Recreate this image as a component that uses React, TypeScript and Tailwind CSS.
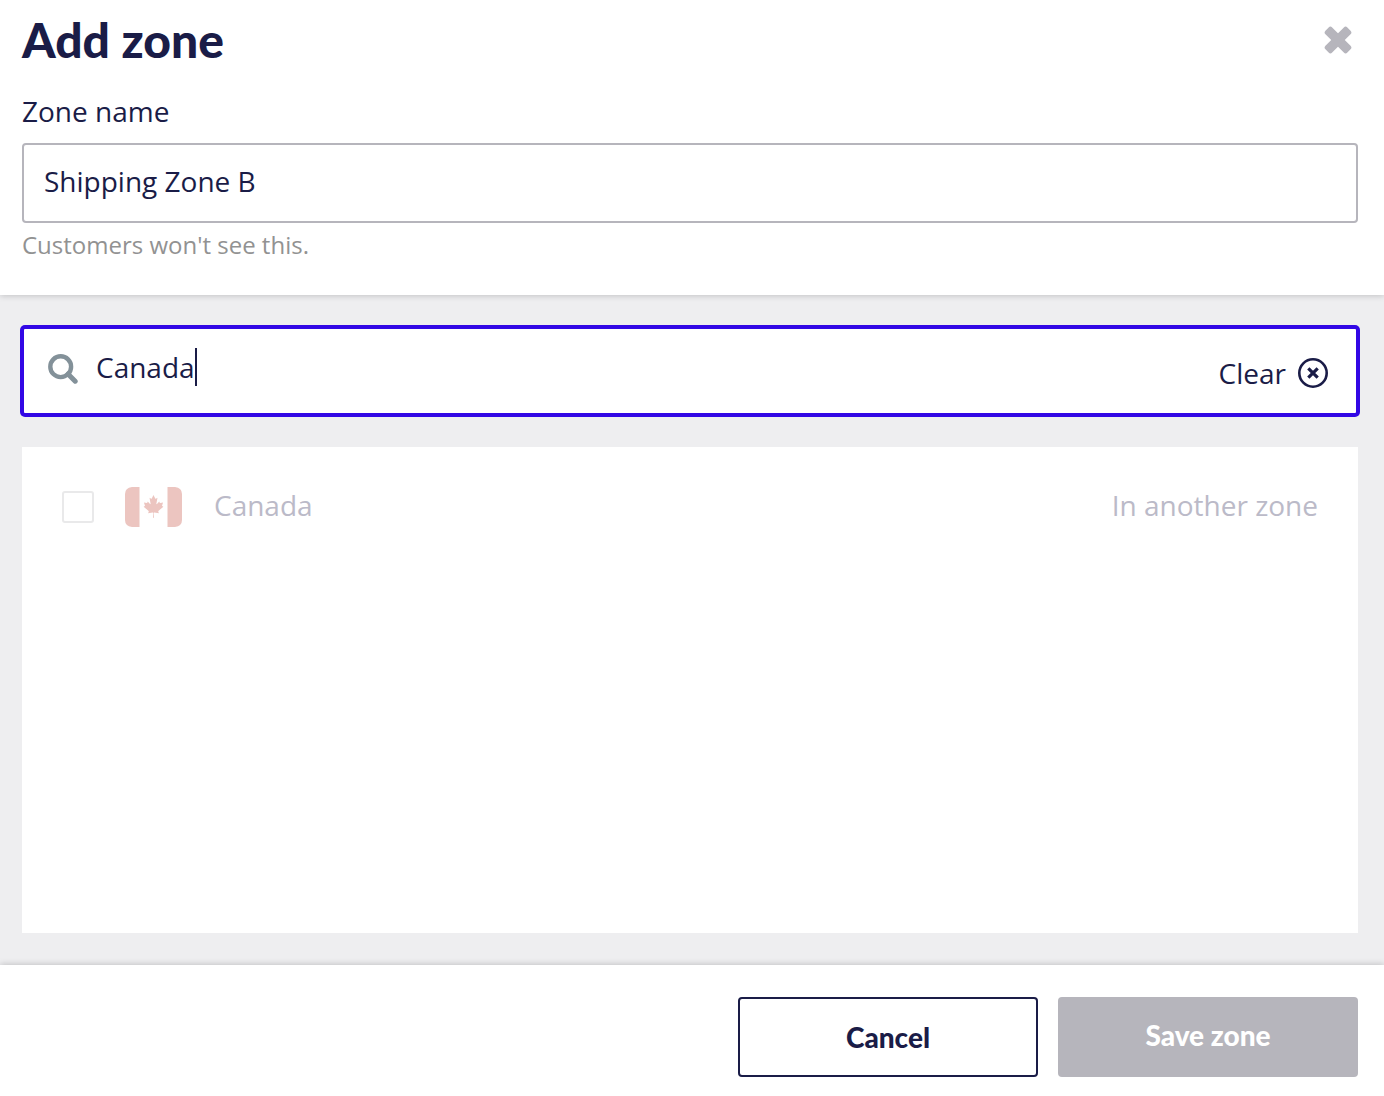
import { useState } from 'react'

const countries = [{ code: 'ca', name: 'Canada', status: 'In another zone' }]

function CloseIcon() {
  return (
    <svg width="28" height="28" viewBox="0 0 28 28" fill="currentColor" aria-hidden="true">
      <rect x="-1.5" y="9.25" width="31" height="9.5" rx="2.5" transform="rotate(45 14 14)" />
      <rect x="-1.5" y="9.25" width="31" height="9.5" rx="2.5" transform="rotate(-45 14 14)" />
    </svg>
  )
}

function SearchIcon() {
  return (
    <svg width="30" height="30" viewBox="0 0 30 30" fill="none" stroke="currentColor" aria-hidden="true">
      <circle cx="12.7" cy="12.7" r="10.4" strokeWidth="4.4" />
      <path d="M20 20l7.2 7.2" strokeWidth="5" strokeLinecap="round" />
    </svg>
  )
}

function ClearIcon() {
  return (
    <svg width="30" height="30" viewBox="0 0 30 30" fill="none" stroke="currentColor" aria-hidden="true">
      <circle cx="15" cy="15" r="13.7" strokeWidth="2.6" />
      <path d="M10.3 10.3l9.4 9.4M19.7 10.3l-9.4 9.4" strokeWidth="3.2" />
    </svg>
  )
}

function CanadaFlag() {
  return (
    <svg width="57" height="40" viewBox="0 0 57 40" fill="#ecc5c0" aria-hidden="true">
      <path d="M14.5 0H7Q0 1 0 7V33Q0 39 7 40H14.5ZM42.5 0H50Q57 1 57 7V33Q57 39 50 40H42.5Z" />
      <path
        transform="translate(28.5 19.3) scale(.0053 .0057)"
        d="m-90 2030 45-863a95 95 0 0 0-111-98l-859 151 116-320a65 65 0 0 0-20-73l-941-762 212-99a65 65 0 0 0 34-79l-186-572 542 115a65 65 0 0 0 73-38l105-247 423 454a65 65 0 0 0 111-57l-204-1052 327 189a65 65 0 0 0 91-27l332-652 332 652a65 65 0 0 0 91 27l327-189-204 1052a65 65 0 0 0 111 57l423-454 105 247a65 65 0 0 0 73 38l542-115-186 572a65 65 0 0 0 34 79l212 99-941 762a65 65 0 0 0-20 73l116 320-859-151a95 95 0 0 0-111 98l45 863z"
      />
    </svg>
  )
}

export default function App() {
  const [name, setName] = useState('Shipping Zone B')
  const [query, setQuery] = useState('Canada')
  const results = countries.filter((c) => c.name.toLowerCase().includes(query.toLowerCase()))

  return (
    <div className="min-h-screen flex flex-col bg-white text-[28px] leading-10 text-[#1a1c47] font-['Open_Sans',sans-serif]">
      <header className="relative z-10 pl-[22px] pr-[26px] pt-3 pb-8 shadow-[0_1px_6px_rgba(0,0,0,0.18)]">
        <div className="flex items-center justify-between pr-[6px]">
          <h1 className="font-['Lato',sans-serif] font-black text-5xl leading-14">Add zone</h1>
          <button type="button" aria-label="Close" className="text-[#b6b5bc]">
            <CloseIcon />
          </button>
        </div>
        <label htmlFor="zone-name" className="block mt-[23px] mb-3">
          Zone name
        </label>
        <input
          id="zone-name"
          value={name}
          onChange={(e) => setName(e.target.value)}
          className="block w-full h-20 px-5 pb-1 border-2 border-[#b6b5bc] rounded outline-none"
        />
        <p className="mt-1 text-2xl leading-9 text-[#929292]">Customers won't see this.</p>
      </header>

      <main className="flex-1 flex flex-col gap-8 pl-[22px] pr-[26px] py-8 bg-[#eeeef0]">
        <div className="flex items-center h-22 px-6 pr-7 bg-white border-2 border-[#3207e5] rounded-[3px] ring-2 ring-[#3207e5]">
          <span className="pb-1 text-[#839199]">
            <SearchIcon />
          </span>
          <div className="flex-1 flex items-center ml-[18px] pb-2">
            <input
              aria-label="Search countries"
              value={query}
              onChange={(e) => setQuery(e.target.value)}
              className="[field-sizing:content] outline-none caret-transparent"
            />
            <span className="w-[2px] h-[38px] bg-[#1a1c47]" />
          </div>
          <button type="button" onClick={() => setQuery('')} className="flex items-center gap-3 pt-1">
            Clear
            <ClearIcon />
          </button>
        </div>

        <ul className="flex-1 p-10 bg-white">
          {results.map((country) => (
            <li key={country.code} className="flex items-center leading-9 text-[#bbbac8]">
              <input
                id={country.code}
                type="checkbox"
                disabled
                className="appearance-none size-8 border-2 border-[#e9e9ea] rounded-[3px] bg-white"
              />
              <label htmlFor={country.code} className="flex items-center gap-8 ml-[31px]">
                <CanadaFlag />
                <span className="pb-1">{country.name}</span>
              </label>
              <span className="ml-auto pb-1">{country.status}</span>
            </li>
          ))}
        </ul>
      </main>

      <footer className="relative z-10 flex justify-end gap-5 pl-[22px] pr-[26px] pt-8 pb-[19px] bg-white font-['Lato',sans-serif] font-black shadow-[0_-1px_6px_rgba(0,0,0,0.18)]">
        <button type="button" className="w-75 h-20 border-2 border-[#1a1c47] rounded">
          Cancel
        </button>
        <button type="button" disabled className="w-75 h-20 pb-1 rounded bg-[#b6b5bc] text-white">
          Save zone
        </button>
      </footer>
    </div>
  )
}
